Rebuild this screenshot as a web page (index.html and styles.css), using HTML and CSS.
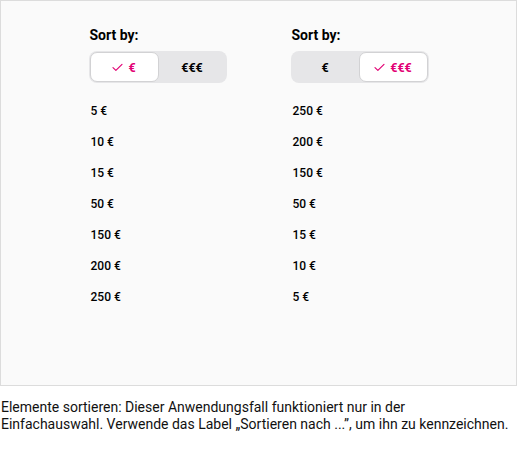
FILE: index.html
```html
<!DOCTYPE html>
<html lang="de">
<head>
<meta charset="UTF-8">
<title>Sort by</title>
<link rel="stylesheet" href="styles.css">
</head>
<body>

<div class="stage">
    <div class="sorter">
        <div class="sort-label">Sort by:</div>
        <div class="segmented">
            <div class="segment selected">
                <svg class="check" viewBox="0 0 12 10" width="11" height="9"><path d="M1 5.2 L4.2 8.2 L11 1.5" fill="none" stroke="#e20074" stroke-width="1.3" stroke-linecap="round" stroke-linejoin="round"/></svg>
                <span>€</span>
            </div>
            <div class="segment"><span>€€€</span></div>
        </div>
        <ul class="price-list">
            <li>5 €</li>
            <li>10 €</li>
            <li>15 €</li>
            <li>50 €</li>
            <li>150 €</li>
            <li>200 €</li>
            <li>250 €</li>
        </ul>
    </div>

    <div class="sorter">
        <div class="sort-label">Sort by:</div>
        <div class="segmented">
            <div class="segment"><span>€</span></div>
            <div class="segment selected">
                <svg class="check" viewBox="0 0 12 10" width="11" height="9"><path d="M1 5.2 L4.2 8.2 L11 1.5" fill="none" stroke="#e20074" stroke-width="1.3" stroke-linecap="round" stroke-linejoin="round"/></svg>
                <span>€€€</span>
            </div>
        </div>
        <ul class="price-list">
            <li>250 €</li>
            <li>200 €</li>
            <li>150 €</li>
            <li>50 €</li>
            <li>15 €</li>
            <li>10 €</li>
            <li>5 €</li>
        </ul>
    </div>
</div>

<p class="caption">Elemente sortieren: Dieser Anwendungsfall funktioniert nur in der<br>Einfachauswahl. Verwende das Label „Sortieren nach ...”, um ihn zu kennzeichnen.</p>

</body>
</html>
```

FILE: styles.css
```css
html, body {
    margin: 0;
    padding: 0;
    background-color: #fff;
    font-family: Roboto, "Liberation Sans", sans-serif;
    color: #000;
}

.stage {
    height: 386px;
    border: 1px solid #dcdcdc;
    background-color: #fafafa;
    display: flex;
    justify-content: center;
    gap: 64px;
    padding-top: 24px;
    box-sizing: border-box;
}

.sorter {
    width: 138px;
}

.sort-label {
    font-size: 14px;
    font-weight: 700;
    line-height: 20px;
    padding-left: 1px;
}

.segmented {
    margin-top: 6px;
    display: flex;
    height: 32px;
    padding: 1px;
    box-sizing: border-box;
    background-color: #e6e6e8;
    border-radius: 8px;
}

.segment {
    flex: 1;
    display: flex;
    align-items: center;
    justify-content: center;
    gap: 5px;
    font-size: 12.5px;
    font-weight: 700;
    border-radius: 7px;
}

.segment.selected {
    background-color: #fff;
    color: #e20074;
    border: 1.5px solid #d2d2d4;
}

.check {
    display: block;
}

.price-list {
    list-style: none;
    margin: 13px 0 0 0;
    padding: 0 0 0 2px;
}

.price-list li {
    height: 31px;
    line-height: 31px;
    font-size: 12px;
    font-weight: 500;
}

.caption {
    margin: 13px 0 0 1px;
    font-size: 14px;
    line-height: 17px;
    color: #111;
    white-space: nowrap;
}
```
